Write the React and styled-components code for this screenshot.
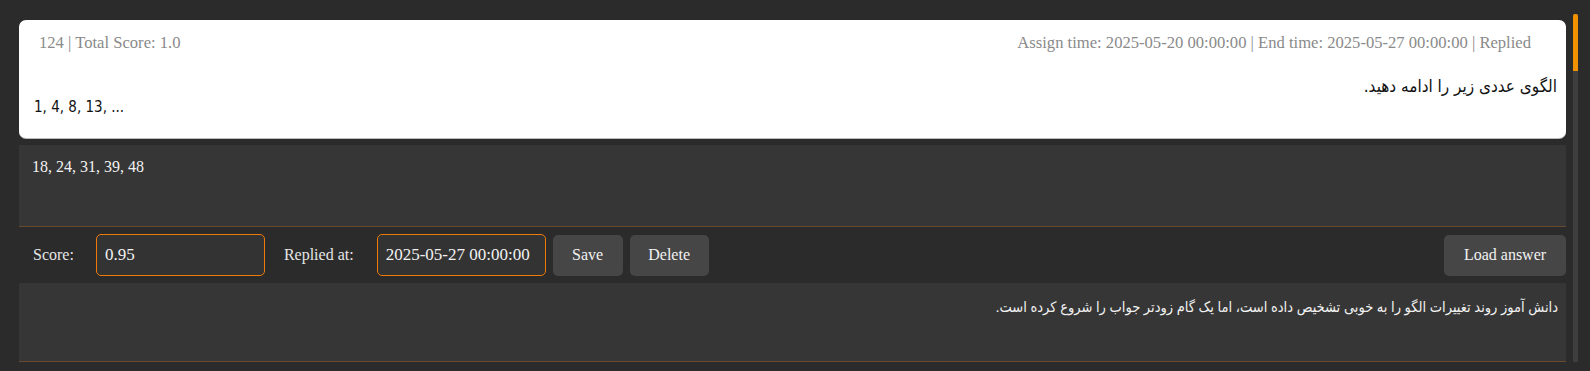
import React from 'react';
import styled, { createGlobalStyle } from 'styled-components';

const COLORS = {
  page: '#2b2b2b',
  panel: '#363636',
  card: '#ffffff',
  muted: '#8a8a8a',
  text: '#f2f2f2',
  orange: '#ee7a0a',
  rule: '#6a4a2e',
  button: '#464646',
  track: '#3e3e3e',
  thumb: '#f39200',
};

const SERIF = '"Liberation Serif", "Times New Roman", serif';
const SANS = '"DejaVu Sans Condensed", "DejaVu Sans", Tahoma, sans-serif';
const PERSIAN_SERIF =
  '"Liberation Serif", "DejaVu Sans Condensed", "DejaVu Sans", serif';

const GlobalStyle = createGlobalStyle`
  html, body {
    margin: 0;
    background: ${COLORS.page};
  }
  * {
    box-sizing: border-box;
  }
`;

const App = () => {
  return (
    <>
      <GlobalStyle />
      <Page>
        <Main>
          <QuestionCard>
            <CardHeader>
              <span>124 | Total Score: 1.0</span>
              <span>
                Assign time: 2025-05-20 00:00:00 | End time: 2025-05-27
                00:00:00 | Replied
              </span>
            </CardHeader>
            <CardBody>
              <RtlLine dir="rtl">الگوی عددی زیر را ادامه دهید.</RtlLine>
              <LtrLine>1, 4, 8, 13, ...</LtrLine>
            </CardBody>
          </QuestionCard>

          <AnswerPanel>18, 24, 31, 39, 48</AnswerPanel>

          <ControlRow>
            <Label $before={0} $after={15}>Score:</Label>
            <Field defaultValue="0.95" />
            <Label $before={12} $after={16}>Replied at:</Label>
            <Field defaultValue="2025-05-27 00:00:00" />
            <Button $width={70}>Save</Button>
            <Button $width={79}>Delete</Button>
            <Spacer />
            <Button $width={122}>Load answer</Button>
          </ControlRow>

          <FeedbackPanel dir="rtl">
            دانش آموز روند تغییرات الگو را به خوبی تشخیص داده است، اما یک گام
            زودتر جواب را شروع کرده است.
          </FeedbackPanel>
        </Main>

        <ScrollTrack>
          <ScrollThumb />
        </ScrollTrack>
      </Page>
    </>
  );
};

const Page = styled.div`
  display: flex;
  gap: 7px;
  padding: 14px 12px 9px 19px;
  width: 1590px;
  height: 371px;
  background: ${COLORS.page};
`;

const Main = styled.div`
  flex: 1;
  display: flex;
  flex-direction: column;
  margin-top: 6px;
  min-width: 0;
`;

const QuestionCard = styled.div`
  background: ${COLORS.card};
  border-radius: 7px;
  box-shadow: 0 1px 0 #bdbdbd;
  height: 118px;
`;

const CardHeader = styled.div`
  display: flex;
  justify-content: space-between;
  padding: 14px 35px 0 20px;
  font-family: ${SERIF};
  font-size: 16.6px;
  line-height: 18px;
  color: ${COLORS.muted};
`;

const CardBody = styled.div`
  padding: 24px 9px 0 15px;
  font-family: ${SANS};
  font-size: 15px;
  line-height: 21px;
  color: #111;
`;

const RtlLine = styled.div`
  text-align: right;
  font-size: 17px;
`;

const LtrLine = styled.div`
  text-align: left;
`;

const AnswerPanel = styled.div`
  margin-top: 7px;
  height: 82px;
  padding: 13px 13px 0;
  background: ${COLORS.panel};
  border-bottom: 1px solid ${COLORS.rule};
  font-family: ${SERIF};
  font-size: 16px;
  line-height: 18px;
  color: ${COLORS.text};
`;

const ControlRow = styled.div`
  display: flex;
  align-items: center;
  gap: 7px;
  height: 56px;
  padding-left: 14px;
`;

const Label = styled.label`
  padding: 0 ${(p) => p.$after}px 0 ${(p) => p.$before}px;
  font-family: ${SERIF};
  font-size: 16px;
  color: #e6e6e6;
`;

const Field = styled.input`
  width: 169px;
  height: 42px;
  padding: 0 8px;
  background: #333333;
  border: 1.5px solid ${COLORS.orange};
  border-radius: 5px;
  outline: none;
  font-family: ${SERIF};
  font-size: 17px;
  color: ${COLORS.text};
`;

const Button = styled.button`
  width: ${(p) => p.$width}px;
  height: 41px;
  padding: 0;
  background: ${COLORS.button};
  border: none;
  border-radius: 5px;
  font-family: ${SERIF};
  font-size: 16px;
  color: ${COLORS.text};
  cursor: pointer;
`;

const Spacer = styled.div`
  flex: 1;
`;

const FeedbackPanel = styled.div`
  height: 79px;
  padding: 15px 8px 0;
  background: ${COLORS.panel};
  border-bottom: 1px solid ${COLORS.rule};
  font-family: ${PERSIAN_SERIF};
  font-size: 14.5px;
  line-height: 18px;
  color: ${COLORS.text};
  text-align: right;
`;

const ScrollTrack = styled.div`
  width: 5px;
  background: ${COLORS.track};
`;

const ScrollThumb = styled.div`
  height: 57px;
  background: ${COLORS.thumb};
  border-radius: 2px 2px 0 0;
`;

export default App;
